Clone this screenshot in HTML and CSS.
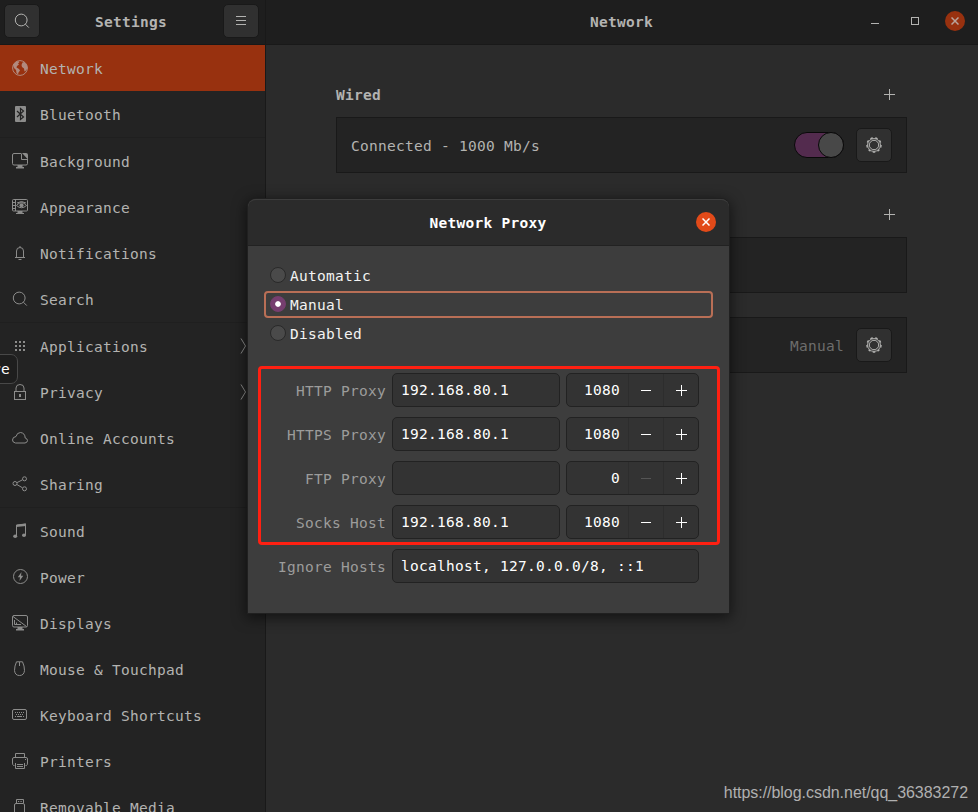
FILE: index.html
```html
<!DOCTYPE html>
<html lang="en">
<head>
<meta charset="utf-8">
<title>Settings</title>
<link rel="stylesheet" href="styles.css">
</head>
<body>
<svg class="defs" width="0" height="0">
  <symbol id="gear" viewBox="0 0 16 16"><circle cx="8" cy="8" r="6.400"/><circle cx="8" cy="8" r="4.700"/><circle class="teeth" cx="8" cy="8" r="7.100" pathLength="90"/></symbol>
  <symbol id="search" viewBox="0 0 16 16"><circle cx="7.200" cy="7" r="5.900"/><path d="M11.400 11.200L14.800 14.600"/></symbol>
  <symbol id="plus" viewBox="0 0 11 11"><path d="M0 5.500H11M5.500 0V11"/></symbol>
  <symbol id="close" viewBox="0 0 8 8"><path d="M.5 .5L7.500 7.500M7.500 .5L.5 7.500"/></symbol>
</svg>
<div class="window">
  <aside class="sidebar">
    <header class="side-head">
      <button class="btn"><svg width="16" height="16"><use href="#search"/></svg></button>
      <h1>Settings</h1>
      <button class="btn"><svg width="16" height="16" viewBox="0 0 16 16"><path d="M3 3.500H13M3 7.500H13M3 11.500H13"/></svg></button>
    </header>
    <nav>
      <a class="row active"><svg viewBox="0 0 16 16"><circle cx="8" cy="8" r="7.400"/><path class="solid" d="M1 5L3 2.500L6 1L7.500 2L6 3.500L7 4.500L5 6L4.500 7.500L7 9L8 10.500L6.500 12.500L6 14.500L4.500 13L4 10L2 8ZM10.500 2.500L12.500 2L15 5.500L15.500 8L14 10.500L12.500 11.500L12 8.500L10 7L9.500 5Z"/></svg><span>Network</span></a>
      <a class="row"><svg viewBox="0 0 16 16"><rect class="solid" x="3" width="11" height="16" rx="1"/><path class="cut" d="M5 5L11.500 11L8.500 13.500V2.500L11.500 5L5 11"/></svg><span>Bluetooth</span></a>
      <hr>
      <a class="row"><svg viewBox="0 0 16 16"><path d="M9 .5H2Q.5 .5 .5 2V10.500Q.5 12 2 12H14Q15.500 12 15.500 10.500V6"/><path class="solid" d="M5.500 12H10.500V14H12V15.500H4V14H5.500ZM10 0H14Q16 0 16 2V6.500Z"/><path d="M9.500 .5V6.500H15.500"/></svg><span>Background</span></a>
      <a class="row"><svg viewBox="0 0 16 16"><rect x=".5" y=".5" width="15" height="11.500" rx="1"/><path d="M3.500 .5V12M1 3.500H3M1 6.500H3M1 9.500H3M4.500 6.500Q9.500 .5 14.500 6.500Q9.500 11 4.500 6.500M5 4Q9.500 1 14 4"/><circle class="solid" cx="9.500" cy="6.200" r="2"/><path class="solid" d="M5.500 12H10.500V14H12V15H4V14H5.500Z"/></svg><span>Appearance</span></a>
      <a class="row"><svg viewBox="0 0 16 16"><path d="M3 12.500H13M4.500 12V6Q4.500 2.500 8 2.500Q11.500 2.500 11.500 6V12M8 1V2.500M6.500 14.500H9.500"/></svg><span>Notifications</span></a>
      <a class="row"><svg viewBox="0 0 16 16"><use href="#search"/></svg><span>Search</span></a>
      <hr>
      <a class="row"><svg viewBox="0 0 16 16"><path class="dots" d="M3 4H13M3 8H13M3 12H13"/></svg><span>Applications</span><svg class="chev" viewBox="0 0 8 16"><path d="M1 .5L5.500 8L1 15.500"/></svg></a>
      <a class="row"><svg viewBox="0 0 16 16"><rect x="2.500" y="7.500" width="11" height="8"/><path d="M4 7V4Q4 .5 8 .5Q12 .5 12 4V7"/><rect class="solid" x="7" y="10" width="2" height="3"/></svg><span>Privacy</span><svg class="chev" viewBox="0 0 8 16"><path d="M1 .5L5.500 8L1 15.500"/></svg></a>
      <a class="row"><svg viewBox="0 0 16 16"><path d="M3.500 13H13Q15.500 12.500 15.500 10.500Q15.300 8.500 13.200 8Q13 3 8.500 2.500Q5 2.500 4 6.500Q.5 7 .5 10Q.5 12.500 3.500 13Z"/></svg><span>Online Accounts</span></a>
      <a class="row"><svg viewBox="0 0 16 16"><circle cx="3" cy="7.500" r="2"/><circle cx="12.500" cy="2.800" r="2"/><circle cx="12.500" cy="12.800" r="2"/><path d="M5 6.600L10.500 3.800M5 8.600L10.500 11.800"/></svg><span>Sharing</span></a>
      <hr>
      <a class="row"><svg viewBox="0 0 16 16"><path d="M4.500 13V2L13.500 1V12"/><path class="solid" d="M4 2L14 .5V3L4 4Z"/><ellipse class="solid" cx="3.200" cy="13.200" rx="2" ry="1.800"/><ellipse class="solid" cx="12" cy="12.200" rx="2" ry="1.800"/></svg><span>Sound</span></a>
      <a class="row"><svg viewBox="0 0 16 16"><circle cx="8.500" cy="7.500" r="7"/><path class="solid" d="M9.500 3L5.800 8.300H8L7.500 12L11.300 6.700H9Z"/></svg><span>Power</span></a>
      <a class="row"><svg viewBox="0 0 16 16"><rect x=".5" y=".5" width="15" height="11.500" rx="1.500"/><path d="M1 1.500L14.500 11.500M2.500 5V9.500H9M4.500 7.500V9.500"/><path class="solid" d="M5.500 12H10.500V14H12V15.500H4V14H5.500Z"/></svg><span>Displays</span></a>
      <a class="row"><svg viewBox="0 0 16 16"><path d="M4.500 .8H10.500Q12.500 5 12.500 9.500Q12 14.500 7.500 14.500Q3 14.500 2.500 9.500Q2.500 5 4.500 .8ZM7.500 1V5"/></svg><span>Mouse &amp; Touchpad</span></a>
      <a class="row"><svg viewBox="0 0 16 16"><rect x=".5" y="2.500" width="14" height="10" rx="1.500"/><path class="keys" d="M3 5.500H13M4 7.500H12"/><path d="M5 9.500H10M3 9.500H4M11 9.500H12"/></svg><span>Keyboard Shortcuts</span></a>
      <a class="row"><svg viewBox="0 0 16 16"><path d="M3.500 4V.5H12.500V4M2.500 12.500H1.500Q.5 12 .5 10V6Q.5 4.500 2 4.500H14Q15.500 4.500 15.500 6V10Q15.500 12 14.500 12.500H13.500M3.500 10V15.500H12.500V10M5 11.500H11M5 13.500H11M13 6.500H14"/></svg><span>Printers</span></a>
      <a class="row"><svg viewBox="0 0 16 16"><path d="M4.500 4V.5H11.500V4M2.500 16V6Q2.500 4.500 4 4.500H11Q12.500 4.500 12.500 6V16M6 2.500H7.200M8.500 2.500H9.700"/></svg><span>Removable Media</span></a>
    </nav>
    <div class="tooltip">re</div>
  </aside>
  <main>
    <header class="main-head">
      <h1>Network</h1>
      <div class="controls">
        <svg width="8" height="10" viewBox="0 0 8 10"><path d="M0 7.500H8"/></svg>
        <svg width="8" height="8" viewBox="0 0 8 8"><rect x=".5" y=".5" width="7" height="7"/></svg>
        <span class="close"><svg width="8" height="8"><use href="#close"/></svg></span>
      </div>
    </header>
    <div class="content">
      <div class="section-head"><h2>Wired</h2><svg width="11" height="11"><use href="#plus"/></svg></div>
      <div class="card"><span>Connected - 1000 Mb/s</span><i class="toggle"></i><button class="btn gear"><svg width="16" height="16"><use href="#gear"/></svg></button></div>
      <div class="section-head second"><svg width="11" height="11"><use href="#plus"/></svg></div>
      <div class="card"></div>
      <div class="card proxy"><span class="dim">Manual</span><button class="btn gear"><svg width="16" height="16"><use href="#gear"/></svg></button></div>
    </div>
  </main>
  <section class="dialog">
    <header><h1>Network Proxy</h1><span class="close"><svg width="8" height="8"><use href="#close"/></svg></span></header>
    <div class="radios">
      <label><i></i>Automatic</label>
      <label class="chosen"><i></i>Manual</label>
      <label><i></i>Disabled</label>
    </div>
    <div class="form">
      <div class="marked">
        <div class="field"><label>HTTP Proxy</label><div class="entry">192.168.80.1</div><div class="spin"><b>1080</b><span><svg width="11" height="11" viewBox="0 0 11 11"><path d="M0 5.500H10"/></svg></span><span><svg width="11" height="11"><use href="#plus"/></svg></span></div></div>
        <div class="field"><label>HTTPS Proxy</label><div class="entry">192.168.80.1</div><div class="spin"><b>1080</b><span><svg width="11" height="11" viewBox="0 0 11 11"><path d="M0 5.500H10"/></svg></span><span><svg width="11" height="11"><use href="#plus"/></svg></span></div></div>
        <div class="field"><label>FTP Proxy</label><div class="entry"></div><div class="spin"><b>0</b><span class="off"><svg width="11" height="11" viewBox="0 0 11 11"><path d="M0 5.500H10"/></svg></span><span><svg width="11" height="11"><use href="#plus"/></svg></span></div></div>
        <div class="field"><label>Socks Host</label><div class="entry">192.168.80.1</div><div class="spin"><b>1080</b><span><svg width="11" height="11" viewBox="0 0 11 11"><path d="M0 5.500H10"/></svg></span><span><svg width="11" height="11"><use href="#plus"/></svg></span></div></div>
      </div>
      <div class="field ignore"><label>Ignore Hosts</label><div class="entry wide">localhost, 127.0.0.0/8, ::1</div></div>
    </div>
  </section>
  <div class="watermark">https://blog.csdn.net/qq_36383272</div>
</div>
</body>
</html>
```
FILE: styles.css
```css
* { box-sizing: border-box; }
body {
  margin: 0;
  font: 14.5px/20px "DejaVu Sans Mono", monospace;
  letter-spacing: 0.27px;
  color: #b3b3b1;
  background: #2b2b2b;
}
h1, h2 { margin: 0; font: bold 14.5px/20px "DejaVu Sans Mono", monospace; }
svg { fill: none; stroke: currentColor; stroke-width: 1; flex: none; display: block; }
.defs { position: absolute; }
.solid { fill: currentColor; stroke: none; }
.teeth { stroke-width: 1.3; stroke-dasharray: 5 5; }
.window {
  position: relative;
  display: flex;
  width: 978px;
  height: 812px;
  overflow: hidden;
}

.sidebar {
  position: relative;
  width: 266px;
  flex: none;
  background: #232323;
  border-right: 1px solid #191919;
}
.side-head {
  display: flex;
  justify-content: space-between;
  height: 45px;
  padding: 4px 6px 0 4px;
  background: #1e1e1e;
  border-bottom: 1px solid #181818;
}
.side-head h1 { padding-top: 8px; margin-left: -1px; }
.btn {
  display: flex;
  align-items: center;
  justify-content: center;
  width: 36px;
  height: 34px;
  padding: 0;
  color: #b3b3b1;
  background: #303030;
  border: 1px solid #191919;
  border-radius: 5px;
}
.row {
  display: flex;
  align-items: center;
  height: 46px;
  padding-left: 12px;
}
.row span { margin: 2px 0 0 12px; }
.row svg { width: 16px; height: 16px; color: #8c8c8b; }
.row .chev { width: 8px; margin: 0 17px 0 auto; }
.row.active { background: #98310f; }
.row.active svg { color: #b28a7e; }
.row .cut { stroke: #232323; stroke-width: 1.2; }
.row .dots { stroke-width: 2; stroke-dasharray: 2 2; }
.row .keys { stroke-dasharray: 1 1; }
hr { height: 1px; margin: 0; border: 0; background: #1f1f1f; }
.tooltip {
  position: absolute;
  left: -20px;
  top: 354px;
  width: 38px;
  height: 30px;
  padding: 4px 7px 0 0;
  text-align: right;
  color: #fff;
  background: #1e1e1e;
  border: 1px solid #484848;
  border-radius: 7px;
}

main { flex: 1; }
.main-head {
  display: flex;
  justify-content: flex-end;
  height: 45px;
  padding: 12px 13px 0 0;
  background: #1e1e1e;
  border-bottom: 1px solid #191919;
}
.main-head h1 { margin-right: 218px; }
.controls { display: flex; gap: 32px; align-items: center; height: 20px; margin-top: -1px; }
.controls .close { margin-left: -6px; }
.close {
  display: flex;
  align-items: center;
  justify-content: center;
  width: 20px;
  height: 20px;
  border-radius: 50%;
  color: #b9a49c;
  background: #98310f;
}
.close svg { stroke-width: 1.5; }
.content { width: 571px; margin-left: 70px; }
.section-head {
  display: flex;
  align-items: flex-start;
  justify-content: space-between;
  height: 72px;
  padding: 40px 12px 0 0;
}
.section-head svg { margin-top: 4px; }
.section-head.second { height: 64px; padding-top: 32px; justify-content: flex-end; }
.card {
  display: flex;
  align-items: center;
  height: 56px;
  padding: 0 14px;
  background: #232323;
  border: 1px solid #191919;
}
.card > span { margin-right: auto; padding-top: 2px; }
.card.proxy { margin-top: 24px; }
.card .dim { margin: 0 0 0 auto; color: #6d6d6c; }
.gear { margin-left: 12px; }
.toggle {
  display: flex;
  justify-content: flex-end;
  width: 50px;
  height: 26px;
  background: #532b4e;
  border: 1px solid #090909;
  border-radius: 13px;
}
.toggle::after {
  content: "";
  box-sizing: border-box;
  width: 26px;
  height: 26px;
  margin: -1px;
  background: #484848;
  border: 1px solid #090909;
  border-radius: 50%;
}

.dialog {
  position: absolute;
  left: 248px;
  top: 199px;
  width: 481px;
  height: 414px;
  color: #f3f3f2;
  background: #3d3d3d;
  border-radius: 8px 8px 0 0;
  box-shadow: 0 0 0 1px #202020, 0 3px 14px 2px rgba(0, 0, 0, 0.55);
}
.dialog header {
  display: grid;
  grid-template-columns: 1fr 20px;
  align-items: center;
  height: 47px;
  padding: 0 13px 1px 0;
  background: #2b2b2b;
  border-top: 1px solid #3d3d3d;
  border-bottom: 1px solid #222;
  border-radius: 8px 8px 0 0;
}
.dialog h1 { text-align: center; padding: 2px 0 0 32px; color: #fff; }
.dialog .close { color: #fff; background: #e24a19; }
.radios { display: grid; gap: 2px; padding: 16px 16px 0; }
.radios label {
  display: flex;
  align-items: center;
  gap: 4px;
  height: 27px;
  padding: 1px 4px 0;
  border: 2px solid transparent;
  border-radius: 4px;
}
.radios i {
  width: 16px;
  height: 16px;
  margin-top: -2px;
  background: #4a4a4a;
  border: 1px solid #292929;
  border-radius: 50%;
}
.radios .chosen { border-color: #b96f56; }
.chosen i {
  background: radial-gradient(circle, #fff 2.4px, #763e6f 3.2px);
  border-color: #763e6f;
}
.form { padding: 19px 9px 0 10px; }
.marked {
  display: grid;
  gap: 10px;
  align-content: start;
  height: 179px;
  padding-top: 4px;
  border: 3px solid #ff2012;
  border-radius: 4px;
}
.field { display: flex; height: 34px; gap: 6px; }
.field label { width: 125px; padding-top: 8px; text-align: right; color: #9c9c9b; }
.entry, .spin {
  height: 34px;
  background: #333;
  border: 1px solid #222;
  border-radius: 5px;
}
.entry { width: 168px; padding: 6px 8px; color: #fff; }
.entry.wide { width: 307px; }
.ignore { margin: 4px 0 0 3px; }
.spin { display: grid; grid-template-columns: 61px 35px 35px; width: 133px; color: #fff; }
.spin b { padding: 6px 8px 0 0; text-align: right; font-weight: normal; }
.spin span {
  display: flex;
  align-items: center;
  justify-content: center;
  padding-top: 1px;
  border-left: 1px solid #2d2d2d;
}
.spin span:last-child { padding-left: 1px; }
.spin .off { color: #555; }
.watermark {
  position: absolute;
  right: 10px;
  bottom: 9px;
  font: 16px/20px "Liberation Sans", sans-serif;
  letter-spacing: -0.04px;
  color: #b0b0b0;
}
```
